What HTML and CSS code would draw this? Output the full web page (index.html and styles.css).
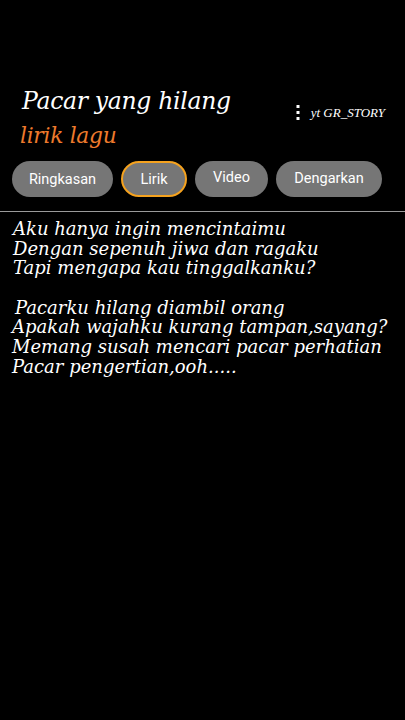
FILE: index.html
```html
<!DOCTYPE html>
<html>
<head>
<meta charset="utf-8">
<link rel="stylesheet" href="styles.css">
</head>
<body>
<div class="page">
  <header class="head">
    <div class="titles">
      <h1 class="title">Pacar yang hilang</h1>
      <div class="subtitle">lirik lagu</div>
    </div>
    <div class="side">
      <svg class="dots" width="4" height="16" viewBox="0 0 4 16"><rect x="0.5" y="0" width="3" height="3" fill="#fff"/><rect x="0.5" y="6" width="3" height="3" fill="#fff"/><rect x="0.5" y="12" width="3" height="3" fill="#fff"/></svg>
      <span class="credit">yt GR_STORY</span>
    </div>
  </header>
  <nav class="tabs">
    <span class="tab t1">Ringkasan</span>
    <span class="tab t2 active">Lirik</span>
    <span class="tab t3">Video</span>
    <span class="tab t4">Dengarkan</span>
  </nav>
  <div class="rule"></div>
  <div class="lyrics">
    <p class="stanza s1">Aku hanya ingin mencintaimu<br>Dengan sepenuh jiwa dan ragaku<br>Tapi mengapa kau tinggalkanku?</p>
    <p class="stanza s2"><span class="first">Pacarku hilang diambil orang</span><br>Apakah wajahku kurang tampan,sayang?<br>Memang susah mencari pacar perhatian<br>Pacar pengertian,ooh.....</p>
  </div>
</div>
</body>
</html>
```
FILE: styles.css
```css
html, body { margin: 0; padding: 0; background: #000; }
.page { width: 405px; height: 720px; background: #000; color: #fff; overflow: hidden; }
.head { display: flex; justify-content: space-between; padding: 83px 20px 0 20px; }
.titles { display: flex; flex-direction: column; }
.title { margin: 0 0 0 2px; font-family: "DejaVu Serif", serif; font-style: italic; font-weight: normal; font-size: 23.5px; line-height: 36px; letter-spacing: -0.3px; color: #fff; }
.subtitle { font-family: "DejaVu Serif", serif; font-style: italic; font-size: 21.8px; line-height: 34px; color: #ee7a2c; letter-spacing: -0.3px; }
.side { display: flex; align-items: center; gap: 11px; padding-top: 22px; height: 16px; }
.dots { display: block; }
.credit { font-family: "Liberation Serif", serif; font-style: italic; font-size: 13px; color: #fff; }
.tabs { display: flex; gap: 8px; padding: 0 0 0 12px; margin-top: 7px; height: 38px; align-items: center; }
.tab { display: flex; align-items: center; justify-content: center; height: 36px; box-sizing: border-box; border-radius: 18px; background: #767676; color: #fff; font-family: Roboto, sans-serif; font-size: 14.5px; }
.t1 { width: 101px; }
.t2 { width: 66px; }
.t3 { width: 73px; padding-bottom: 4px; }
.t4 { width: 106px; padding-bottom: 2px; }
.active { border: 2px solid #f5a21e; }
.rule { height: 1px; background: #9a9a9a; margin-top: 13px; }
.lyrics { padding: 7px 0 0 13px; font-family: "DejaVu Serif", serif; font-style: italic; font-size: 18px; line-height: 19.7px; letter-spacing: 0; }
.stanza { margin: 0; }
.s2 { margin-top: 19.5px; margin-left: -1px; }
.first { margin-left: 3px; }
```
